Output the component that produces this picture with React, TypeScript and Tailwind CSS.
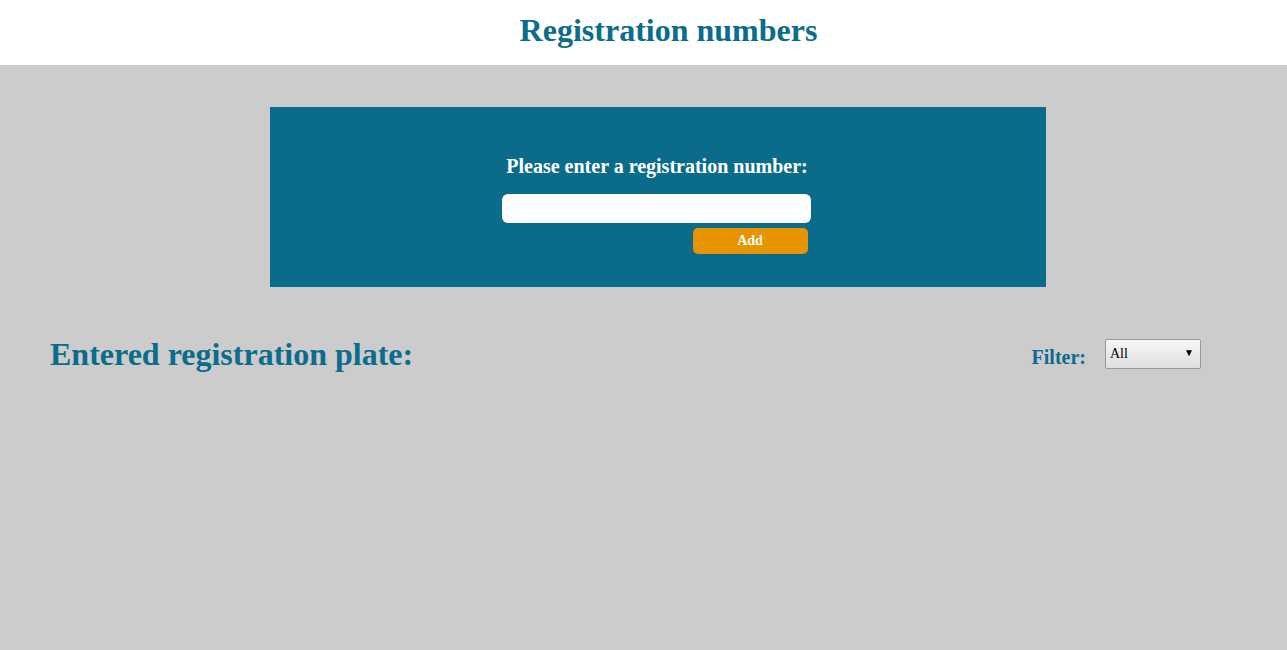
export default function App() {
  return (
    <div className="min-h-[650px] w-full bg-[#cccccc] font-['Liberation_Serif',serif]">
      {/* Header */}
      <header className="h-[65px] bg-white flex items-center justify-center pl-[50px] pb-[6px]">
        <h1 className="text-[32px] font-bold leading-none text-[#0b6c8b]">Registration numbers</h1>
      </header>

      {/* Entry panel */}
      <div className="pt-[42px]">
        <div className="ml-[270px] w-[776px] h-[180px] bg-[#0a6c8a] flex flex-col items-center pt-[48px] pr-[4px]">
          <label className="text-[20px] font-bold text-white leading-[23px] pl-[2px]">
            Please enter a registration number:
          </label>
          <div className="flex flex-col items-end mt-[16px]">
            <input type="text" className="w-[309px] h-[29px] bg-white rounded-[6px] outline-none px-2" />
            <button className="mt-[5px] mr-[3px] w-[115px] h-[26px] bg-[#e69500] rounded-[5px] text-white text-[14px] font-bold leading-none">
              Add
            </button>
          </div>
        </div>
      </div>

      {/* List header */}
      <div className="flex items-center justify-between mt-[43px] pl-[50px] pr-[86px]">
        <h2 className="text-[32px] font-bold text-[#0b6c8b]">Entered registration plate:</h2>
        <div className="flex items-center gap-[19px]">
          <span className="text-[20px] font-bold text-[#0b6c8b] mt-[5px]">Filter:</span>
          <div className="relative w-[96px] h-[30px] border border-[#999] rounded-[2px] bg-gradient-to-b from-[#f7f7f7] to-[#dedede] flex items-center pl-[4px] pb-[2px]">
            <span className="text-[14px] text-black font-['Liberation_Serif',serif]">All</span>
            <span className="absolute right-[6px] top-[8px] text-[10px] leading-none text-black">▼</span>
          </div>
        </div>
      </div>
    </div>
  );
}
